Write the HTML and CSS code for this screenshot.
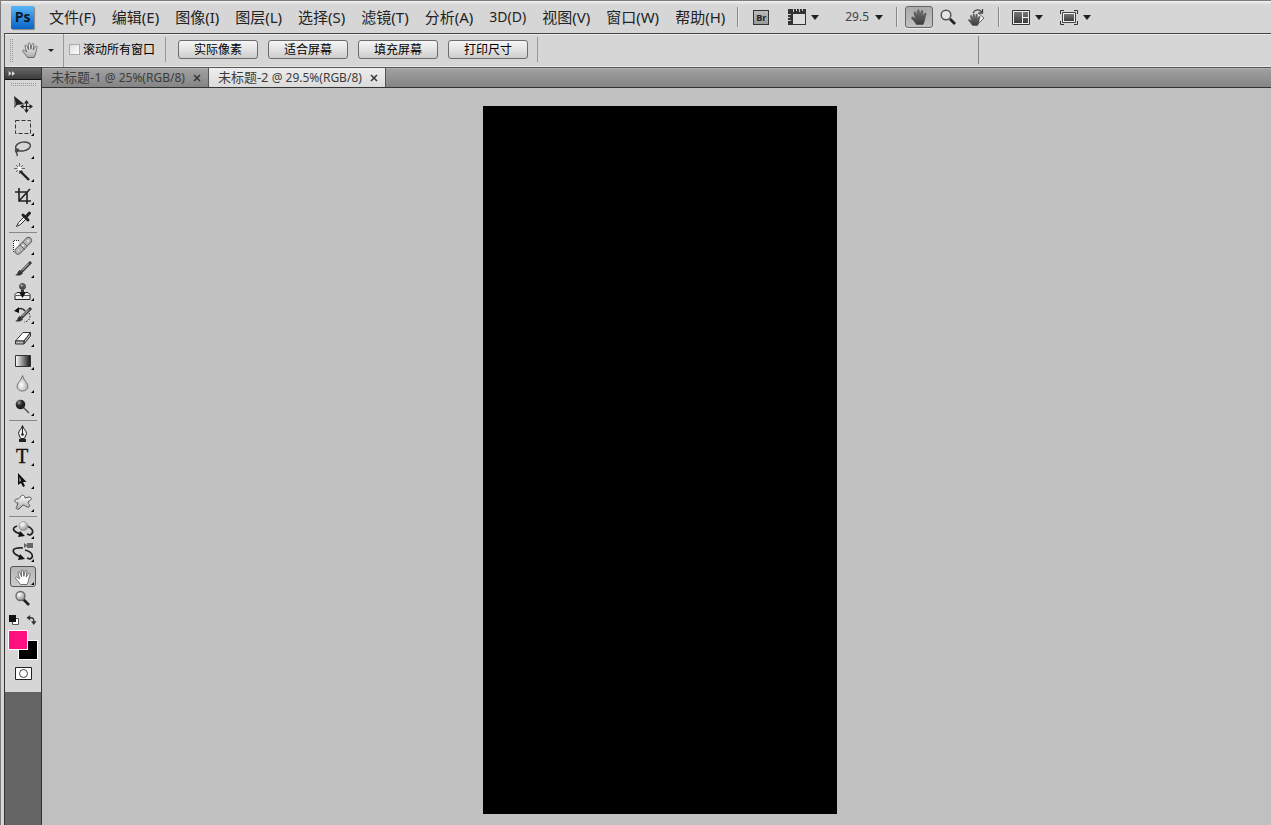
FILE: index.html
```html
<!DOCTYPE html>
<html lang="zh-CN">
<head>
<meta charset="utf-8">
<title>Photoshop</title>
<link rel="stylesheet" href="styles.css">
</head>
<body>
<svg class="defs" width="0" height="0" aria-hidden="true">
  <defs>
    <linearGradient id="metal" x1="0" y1="0" x2="0" y2="1"><stop offset="0" stop-color="#fff"/><stop offset="1" stop-color="#aaa"/></linearGradient>
    <linearGradient id="fade" x1="0" y1="0" x2="1" y2="0"><stop offset="0" stop-color="#fff"/><stop offset="1" stop-color="#111"/></linearGradient>
    <linearGradient id="dark" x1="0" y1="0" x2="0" y2="1"><stop offset="0" stop-color="#777"/><stop offset="1" stop-color="#3c3c3c"/></linearGradient>
    <radialGradient id="ball" cx=".35" cy=".3" r=".8"><stop offset="0" stop-color="#fff"/><stop offset="1" stop-color="#888"/></radialGradient>
    <radialGradient id="drop" cx=".4" cy=".6" r=".6"><stop offset="0" stop-color="#fff"/><stop offset="1" stop-color="#aaa"/></radialGradient>
    <radialGradient id="blackball" cx=".35" cy=".3" r=".7"><stop offset="0" stop-color="#999"/><stop offset=".5" stop-color="#222"/></radialGradient>
    <path id="hand" d="M5.500 15.500C4 13 2 11 .6 9.300C.2 8.200 1.600 7.700 2.500 8.400L4.600 10L3 4C2.900 2.700 4.300 2.400 4.800 3.600L6.500 7.700L6.300 1.800C6.500.5 8 .5 8.200 1.800L8.800 7.300L10.200 2C10.700.9 12 1.300 11.900 2.500L11.200 8L13.500 4.500C14.300 3.700 15.400 4.300 15 5.500C13.800 8.500 14 12 12 15.500Z"/>
    <path id="corner" d="M29 17v3h-3z" fill="#000"/>
  </defs>
</svg>
<div class="app">
  <header class="menubar">
    <span class="logo">Ps</span>
    <nav class="menus">
      <button>文件(F)</button><button>编辑(E)</button><button>图像(I)</button><button>图层(L)</button><button>选择(S)</button><button>滤镜(T)</button><button>分析(A)</button><button class="threed">3D(D)</button><button>视图(V)</button><button>窗口(W)</button><button>帮助(H)</button>
    </nav>
    <div class="appbar">
      <i class="rule"></i>
      <button class="bridge" aria-label="Bridge">Br</button>
      <button class="drop" aria-label="查看额外内容"><svg width="18" height="16" viewBox="0 0 18 16"><path d="M0 0h18v16H0z" fill="#333"/><path d="M5 5h12v10H5z" fill="#ddd"/><path d="M5.500 0v3M8.500 0v2M11.500 0v3M14.500 0v2M0 5.500h3M0 8.500h2M0 11.500h3" stroke="#ccc"/></svg><i class="caret"></i></button>
      <button class="drop zoomlevel">29.5<i class="caret"></i></button>
      <i class="rule"></i>
      <div class="views">
        <button class="view on" aria-label="抓手"><svg width="16" height="16" viewBox="0 0 16 16"><use href="#hand" fill="url(#dark)" stroke="#4a4a4a" stroke-width=".6"/></svg></button>
        <button class="view" aria-label="缩放"><svg width="16" height="16" viewBox="0 0 16 16"><circle cx="6" cy="6" r="4.800" fill="#e5e5e5" stroke="#555" stroke-width="1.500"/><path d="M10 10l5 5" stroke="#222" stroke-width="2.800"/></svg></button>
        <button class="view" aria-label="旋转视图"><svg width="18" height="19" viewBox="0 0 18 19"><path d="M10 5l6 5-6 6" fill="#eee" stroke="#666"/><g transform="translate(0 5) scale(.8)"><use href="#hand" fill="url(#dark)" stroke="#4a4a4a" stroke-width=".6"/></g><path d="M5 5C7 1 11 1 14 4M14.500 1v4h-4" fill="none" stroke="#444" stroke-width="1.300"/></svg></button>
      </div>
      <i class="rule"></i>
      <button class="drop" aria-label="排列文档"><svg width="18" height="15" viewBox="0 0 18 15"><path d="M.5.500h17v14H.5z" fill="#eee" stroke="#333"/><path d="M2 2h8v11H2zM11 2h5v5h-5zM11 8h5v5h-5z" fill="url(#dark)"/></svg><i class="caret"></i></button>
      <button class="drop screen" aria-label="屏幕模式"><svg width="18" height="15" viewBox="0 0 18 15"><path d="M.5 4V.5H4M14 .5h3.500V4M17.500 11v3.500H14M4 14.500H.5V11" fill="none" stroke="#333"/><path d="M2.500 2.500h13v10h-13z" fill="#eee" stroke="#444"/><path d="M4 4h10v7H4z" fill="url(#dark)"/></svg><i class="caret"></i></button>
    </div>
  </header>
  <div class="options">
    <i class="grip"></i>
    <button class="current" aria-label="抓手工具"><svg width="17" height="17" viewBox="0 0 17 17"><use href="#hand" fill="url(#metal)" stroke="#555" stroke-width=".8"/></svg><i class="caret small"></i></button>
    <label class="scroll"><input type="checkbox">滚动所有窗口</label>
    <div class="sizes"><button>实际像素</button><button>适合屏幕</button><button>填充屏幕</button><button>打印尺寸</button></div>
    <div class="rest"></div>
  </div>
  <div class="workspace">
    <aside class="tools">
      <button class="collapse" aria-label="展开"><svg width="8" height="5" viewBox="0 0 8 6"><path d="M0 0l3.500 3L0 6zM4 0l3.500 3L4 6z" fill="#ddd"/></svg></button>
      <div class="panel">
        <i class="dots"></i>
        <div class="group">
          <button aria-label="移动"><svg viewBox="0 0 36 23"><path d="M9 3v12l3-3 7-1z" fill="#222"/><path d="M9 3v12l2-4z" fill="#888"/><path d="M21.500 8v11M16 13.500h11" stroke="#222" stroke-width="1.200"/><path d="M21.500 7l2.500 3.500h-5zM21.500 20l2.500-3.500h-5zM15 13.500l3.500-2.500v5zM28 13.500l-3.500-2.500v5z" fill="#222"/></svg></button>
          <button aria-label="矩形选框"><svg viewBox="0 0 36 23"><path d="M10.500 4.500h15v13h-15z" fill="none" stroke="#333" stroke-dasharray="4 2"/><use href="#corner"/></svg></button>
          <button aria-label="套索"><svg viewBox="0 0 36 23"><g fill="none" stroke="#444" stroke-width="1.400"><ellipse cx="18" cy="7.500" rx="7.500" ry="4.400" transform="rotate(-10 18 7.500)"/><path d="M12 10c-3 1-1 4 1 2s-2-3-2 0 2 2 1 5"/></g><use href="#corner"/></svg></button>
          <button aria-label="魔棒"><svg viewBox="0 0 36 23"><path d="M15 9l9 9" stroke="#222" stroke-width="2.400"/><path d="M14.500 1v11M9 6.500h11M11 3l7 7M18 3l-7 7" stroke="#666"/><circle cx="14.500" cy="6.500" r="2" fill="#fff"/><use href="#corner"/></svg></button>
          <button aria-label="裁剪"><svg viewBox="0 0 36 23"><path d="M14 3v13h12M10 7h12v12M14 16L25 4" fill="none" stroke="#222" stroke-width="1.600"/><use href="#corner"/></svg></button>
          <button aria-label="吸管"><svg viewBox="0 0 36 23"><path d="M11.500 18.500l2-4 6-6 2 2-6 6z" fill="#eee" stroke="#333"/><path d="M18 7l5 5M20.500 9.500l4-4.500" stroke="#222" stroke-width="3" stroke-linecap="round"/><use href="#corner"/></svg></button>
        </div>
        <hr>
        <div class="group">
          <button aria-label="修复画笔"><svg viewBox="0 0 36 23"><path d="M14 5.500H8.500v11H12" fill="#fff" stroke="#222" stroke-dasharray="1 1"/><path d="M13 16L23.500 5.500" stroke="#555" stroke-width="7" stroke-linecap="round"/><path d="M13 16L23.500 5.500" stroke="#b5b5b5" stroke-width="5.400" stroke-linecap="round"/><path d="M15 10l5 5M18 7l4 4" stroke="#666"/><path d="M13 15.500h1M17 10.500h2M22 6h2" stroke="#fff"/><use href="#corner"/></svg></button>
          <button aria-label="画笔"><svg viewBox="0 0 36 23"><path d="M10 17c3 0 2-4 5-5l3 3c-2 3-5 3-8 2z" fill="#333"/><path d="M16.500 13.500L26 4" stroke="#333" stroke-width="3"/><path d="M17 12.500L24 5.500" stroke="#ddd"/><use href="#corner"/></svg></button>
          <button aria-label="仿制图章"><svg viewBox="0 0 36 23"><circle cx="17.500" cy="5.500" r="3" fill="url(#dark)" stroke="#444"/><circle cx="16.500" cy="4.500" r="1" fill="#bbb"/><path d="M17.500 9v4" stroke="#333" stroke-width="3"/><path d="M12 11.500h11l2 2v5h-15v-5z" fill="#eee" stroke="#222"/><path d="M11 14.500h14" stroke="#555"/><path d="M14.500 12h6l-3 5z" fill="#111"/><use href="#corner"/></svg></button>
          <button aria-label="历史记录画笔"><svg viewBox="0 0 36 23"><path d="M10 17c3 0 2-4 5-5l3 3c-2 3-5 3-8 2z" fill="#333"/><path d="M16.500 13.500L26 4" stroke="#333" stroke-width="3"/><path d="M17 12.500L24 5.500" stroke="#ddd"/><path d="M12 6c3-2 6-2 8 1" stroke="#222" stroke-width="1.500" fill="none"/><path d="M9 7l5-4v6z" fill="#111"/><path d="M24 9c3 5-1 9-5 9" fill="none" stroke="#222" stroke-dasharray="1.500 1.500"/><use href="#corner"/></svg></button>
          <button aria-label="橡皮擦"><svg viewBox="0 0 36 23"><path d="M10.500 14L18 5.500h7.500L19 14z" fill="#fff" stroke="#333"/><path d="M10.500 14v3H19v-3zM19 17l6.500-8V5.500L19 14z" fill="#bbb" stroke="#333" stroke-linejoin="round"/><use href="#corner"/></svg></button>
          <button aria-label="渐变"><svg viewBox="0 0 36 23"><path d="M10.500 5.500h15v11h-15z" fill="url(#fade)" stroke="#333"/><use href="#corner"/></svg></button>
          <button aria-label="模糊"><svg viewBox="0 0 36 23"><path d="M17.500 2.500C16 8 12 10 12 13.500c0 6 11 6 11 0 0-3.500-4-5.500-5.500-11z" fill="url(#drop)" stroke="#777"/><use href="#corner"/></svg></button>
          <button aria-label="减淡"><svg viewBox="0 0 36 23"><path d="M18 11l6 6" stroke="#555" stroke-width="1.500"/><circle cx="15.500" cy="8.500" r="4.800" fill="url(#blackball)"/><use href="#corner"/></svg></button>
        </div>
        <hr>
        <div class="group">
          <button aria-label="钢笔"><svg viewBox="0 0 36 23"><path d="M17.500 2.500c1 4 4 5 4 8l-2 5h-4l-2-5c0-3 3-4 4-8z" fill="#eee" stroke="#222"/><path d="M17.500 3v8" stroke="#222"/><circle cx="17.500" cy="11.500" r="1.300" fill="#222"/><path d="M14 17.500h7" stroke="#222" stroke-width="3"/><use href="#corner"/></svg></button>
          <button aria-label="文字"><svg viewBox="0 0 36 23"><text x="11" y="17" class="glyph">T</text><use href="#corner"/></svg></button>
          <button aria-label="路径选择"><svg viewBox="0 0 36 23"><path d="M13 4v12l3-2 2 4 2-1-2-4h3.500z" fill="#111"/><path d="M14.500 8v5l1.500-1.500z" fill="#ccc"/><use href="#corner"/></svg></button>
          <button aria-label="自定形状"><svg viewBox="0 0 36 23"><path d="M16 4c2-2 4 0 4 2l4-1c3 0 3 3 0 4l-1 1c0 2 3 3 1 5-2 1-4-2-6-2l-4 4c-2 1-4-1-2-3l1-3c-4 0-4-4-1-4 2 0 3-1 4-3z" fill="url(#metal)" stroke="#555"/><use href="#corner"/></svg></button>
        </div>
        <hr>
        <div class="group">
          <button aria-label="3D旋转"><svg viewBox="0 0 36 23"><path d="M12 7c-6 2-4 6 4 8M22 7c7 3 7 7 3 9l-3-1" fill="none" stroke="#222" stroke-width="1.700"/><path d="M15 12l5 5-7 1z" fill="#111"/><circle cx="18.500" cy="7" r="4.500" fill="url(#ball)" stroke="#777" stroke-width=".5"/><use href="#corner"/></svg></button>
          <button aria-label="3D环绕"><svg viewBox="0 0 36 23"><path d="M18 6C9 5 6 8 10 12l7 4M20 8c8 2 9 7 5 9l-3-1" fill="none" stroke="#222" stroke-width="1.700"/><path d="M15 12l5 5-7 1z" fill="#111"/><path d="M19 1l3 2V1h6v5h-6V4l-3 2z" fill="#666"/><use href="#corner"/></svg></button>
          <button class="picked" aria-label="抓手"><svg viewBox="0 0 36 23"><g transform="translate(10 4)"><use href="#hand" fill="#fff" stroke="#555" stroke-width=".8"/></g><use href="#corner"/></svg></button>
          <button aria-label="缩放"><svg viewBox="0 0 36 23"><path d="M18 11l6 6" stroke="#222" stroke-width="2.600"/><circle cx="15.500" cy="8" r="4.500" fill="url(#ball)" stroke="#666" stroke-width="1.300"/></svg></button>
        </div>
        <div class="colors">
          <div class="mini">
            <button aria-label="默认颜色"><svg width="10" height="10" viewBox="0 0 10 10"><path d="M3.500 3.500h6v6h-6z" fill="#fff" stroke="#555"/><path d="M0 0h7v7H0z" fill="#111"/></svg></button>
            <button aria-label="切换颜色"><svg width="11" height="10" viewBox="0 0 11 11"><path d="M2 3h3c3 0 3 2 3 5" fill="none" stroke="#333" stroke-width="1.500"/><path d="M0 3l4-3v6zM8 11L5 7h6z" fill="#333"/></svg></button>
          </div>
          <div class="swatches"><button class="back" aria-label="背景色"></button><button class="fore" aria-label="前景色"></button></div>
          <button class="mask" aria-label="快速蒙版"><svg width="17" height="13" viewBox="0 0 17 13"><path d="M.5.500h16v12H.5z" fill="#fff" stroke="#222"/><circle cx="8.500" cy="6.500" r="4" fill="#fff" stroke="#444"/></svg></button>
        </div>
      </div>
    </aside>
    <main class="documents">
      <div class="tabs">
        <div class="tab"><span><span class="name">未标题-1</span> @ 25%(RGB/8)</span><button aria-label="关闭"><svg width="8" height="8" viewBox="0 0 8 8"><path d="M1 1l6 6M7 1L1 7" stroke="#333" stroke-width="1.500"/></svg></button></div>
        <div class="tab active"><span><span class="name">未标题-2</span> @ 29.5%(RGB/8)</span><button aria-label="关闭"><svg width="8" height="8" viewBox="0 0 8 8"><path d="M1 1l6 6M7 1L1 7" stroke="#333" stroke-width="1.500"/></svg></button></div>
      </div>
      <div class="stage"><div class="canvas"></div></div>
    </main>
  </div>
</div>
</body>
</html>
```
FILE: styles.css
```css
* { box-sizing: border-box; }
body { margin: 0; background: #d6d6d6; color: #222; font: 12px/16px "Noto Sans", "Noto Sans CJK SC", sans-serif; }
button { margin: 0; padding: 0; border: 0; background: none; color: inherit; font: inherit; }
svg { display: block; flex: none; }
.defs { position: absolute; }
.app { display: flex; flex-direction: column; min-height: 100vh; border-top: 1px solid #7f7c7e; border-left: 1px solid #7f7c7e; }

.menubar { display: flex; align-items: center; height: 32px; padding-left: 10px; background: linear-gradient(#f2f2f2, #d6d6d6 4px); white-space: nowrap; }
.logo { width: 23px; height: 23px; border-radius: 1px; background: linear-gradient(#58b7f5, #0a62c4); color: #07182b; font: bold 14px/22px "Open Sans", sans-serif; text-align: center; box-shadow: 1px 1px 1px #888; }
.menus { display: flex; gap: 16px; margin-left: 15px; font-size: 15px; line-height: 20px; }
.menus .threed { font-size: 14px; }
.appbar { display: flex; align-items: center; margin-left: 12px; color: #444; }
.rule { width: 2px; height: 20px; border-left: 1px solid #888; border-right: 1px solid #e6e6e6; }
.bridge { width: 16px; height: 15px; margin: 0 19px 0 14px; border: 1px solid #333; background: linear-gradient(#bbb, #999); color: #222; font: bold 9px/13px "Open Sans", sans-serif; }
.drop { display: flex; align-items: center; gap: 5px; }
.caret { border: 4px solid transparent; border-top: 5px solid #222; border-bottom: 0; }
.caret.small { border-width: 3px 3px 0; }
.zoomlevel { gap: 6px; margin: 0 13px 0 26px; }
.views { display: flex; gap: 1px; margin: 0 7px 0 7px; }
.view { display: flex; align-items: center; justify-content: center; width: 28px; height: 22px; border: 1px solid transparent; border-radius: 3px; }
.view.on { border-color: #666; background: linear-gradient(#aaa, #c2c2c2); box-shadow: 0 1px #eee; }
.rule + .drop { margin-left: 12px; }
.screen { margin-left: 17px; }

.options { display: flex; align-items: stretch; height: 34px; margin-left: 3px; border-top: 1px solid #444; border-left: 1px solid #555; box-shadow: inset 0 1px #ebebeb, inset 0 -1px #e8e8e8; font-size: 12px; }
.grip { width: 4px; margin: 5px 9px 5px 4px; background: conic-gradient(#999 90deg, transparent 0) 0 0 / 2px 2px; }
.current { display: flex; align-items: center; gap: 9px; padding-right: 9px; border-right: 1px solid #999; }
.scroll { display: flex; align-items: center; gap: 3px; padding: 0 0 2px 5px; color: #000; }
.scroll input { appearance: none; width: 11px; height: 11px; margin: 0; border: 1px solid #aaa; background: linear-gradient(135deg, #ddd, #fff); }
.sizes { display: flex; align-items: center; gap: 10px; margin: 3px 0 5px 10px; padding: 0 9px 0 12px; border: 1px solid #999; border-width: 0 1px; }
.sizes button { width: 80px; height: 19px; border: 1px solid #6c6c6c; border-radius: 3px; background: linear-gradient(#f6f6f6, #e0e0e0 55%, #cdcdcd); color: #000; line-height: 17px; }
.rest { width: 441px; margin: 2px 0 3px; border-right: 1px solid #888; }

.workspace { display: flex; flex: 1; margin-left: 3px; border-left: 1px solid #333; }
.tools { display: flex; flex-direction: column; width: 37px; border-right: 1px solid #333; background: #646464; }
.collapse { display: flex; align-items: center; height: 13px; padding-left: 3px; border-top: 1px solid #444; border-bottom: 1px solid #111; background: linear-gradient(#666, #3c3c3c); }
.panel { padding-bottom: 12px; background: #d6d6d6; }
.dots { display: block; height: 4px; margin: 3px 4px 6px 5px; background: conic-gradient(#999 90deg, transparent 0) 0 0 / 2px 2px; }
.group { display: flex; flex-direction: column; }
.group button { height: 23px; }
.group svg { width: 36px; height: 23px; }
.panel hr { height: 1px; margin: 1px 4px 2px; border: 0; background: #888; }
.glyph { font: 20px "Liberation Serif", serif; fill: #111; stroke: #111; stroke-width: .4px; }
.group .picked { width: 26px; height: 21px; margin: 1px 5px; overflow: hidden; border: 1px solid #555; border-radius: 3px; background: linear-gradient(#b5b5b5, #ccc); }
.picked svg { margin: -2px -6px; }
.colors { display: flex; flex-direction: column; align-items: center; }
.mini { display: flex; gap: 7px; margin-top: 4px; }
.swatches { display: grid; width: 30px; margin: 5px 0 7px; }
.swatches button { grid-area: 1 / 1; width: 20px; height: 20px; border: 1px solid #fff; }
.swatches .back { margin: 10px 0 0 10px; background: #000; }
.swatches .fore { background: #ff1280; }

.documents { display: flex; flex: 1; flex-direction: column; min-width: 0; }
.tabs { display: flex; height: 21px; border-top: 1px solid #555; border-bottom: 1px solid #333; background: linear-gradient(#a1a1a1, #858585); box-shadow: inset 0 1px #b0b0b0; white-space: nowrap; }
.tab { display: flex; align-items: center; gap: 8px; padding: 0 7px 0 9px; border-right: 1px solid #555; color: #3c3c3c; line-height: 19px; }
.tab .name { font-size: 13px; }
.tab.active { background: linear-gradient(#eee, #dadada); }
.stage { display: flex; flex: 1; justify-content: center; padding: 18px 0 11px 7px; background: #c0c0c0; }
.canvas { width: 354px; background: #000; }
```
